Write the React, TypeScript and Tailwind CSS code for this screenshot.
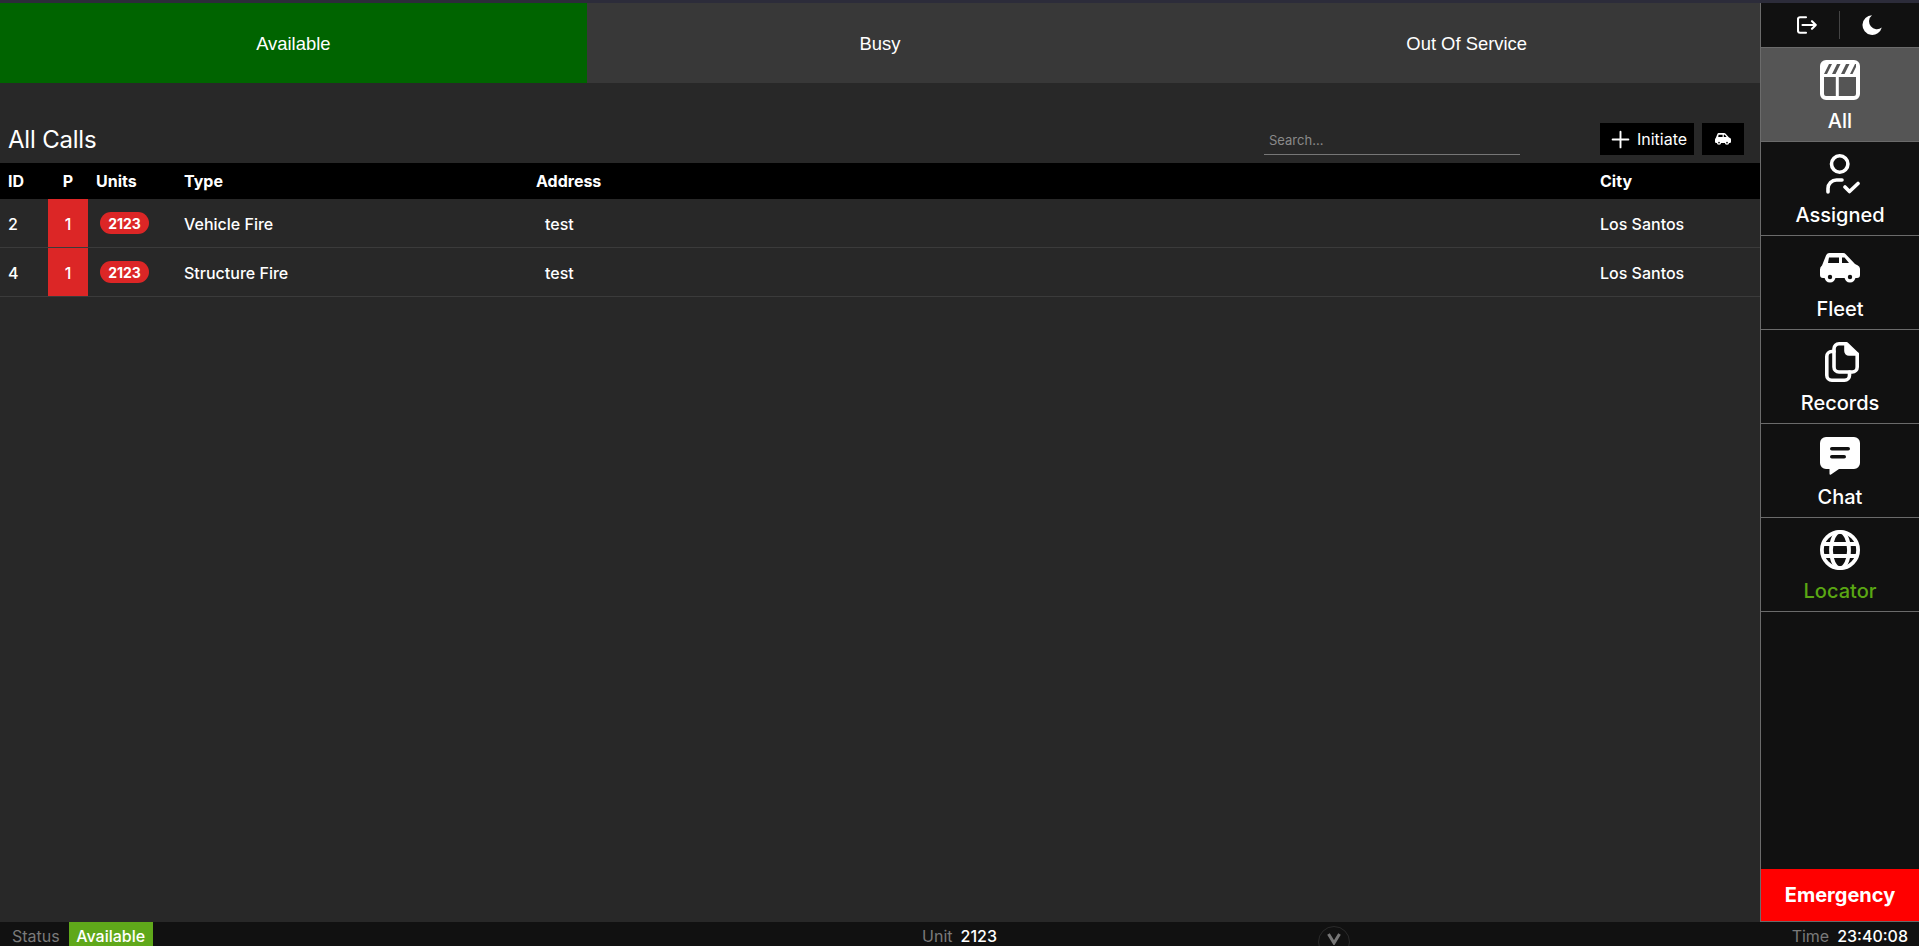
import React from "react";
import { Plus } from "lucide-react";

const Clap = () => (
  <svg width="40" height="40" viewBox="0 0 40 40" fill="none">
    <rect x="2" y="2" width="36" height="36" rx="4" stroke="#fff" strokeWidth="4" />
    <path d="M2 17h36V5a3 3 0 0 0-3-3H5a3 3 0 0 0-3 3z" fill="#fff" />
    <path d="M4 14l5-10h3l-5 10zM12 14l5-10h3.500l-5 10zM21 14l5-10h3.500l-5 10zM30 14l5-10h1v3l-3.500 7z" fill="#555" />
    <path d="M17.300 16v22" stroke="#fff" strokeWidth="3" />
  </svg>
);
const UserCheck = () => (
  <svg width="40" height="40" viewBox="0 0 40 40" fill="none" stroke="#fff" strokeWidth="3.600" strokeLinecap="round" strokeLinejoin="round">
    <circle cx="19.7" cy="10" r="8.200" />
    <path d="M8 38v-3.500a8.500 8.500 0 0 1 8.500-8.500H22" />
    <path d="M25 33l4.500 4.500 8.500-8" />
  </svg>
);
const Car = ({ w = 40, h = 30 }: { w?: number; h?: number }) => (
  <svg width={w} height={h} viewBox="0 0 40 30">
    <path fillRule="evenodd" fill="#fff" d="M9 0h14a4 4 0 0 1 3 1.400L35 11l2.500 1.200A4 4 0 0 1 40 16v6a3 3 0 0 1-3 3H3a3 3 0 0 1-3-3v-5.500a5 5 0 0 1 2-4L6 2.500A4 4 0 0 1 9 0zM9 4.500L8 10h11V4.500zM22 4.500V10h7l-4.500-5.500z" />
    <circle cx="10" cy="24" r="5.500" fill="#fff" />
    <circle cx="30" cy="24" r="5.500" fill="#fff" />
    <circle cx="10" cy="24" r="2.200" fill="#111" />
    <circle cx="30" cy="24" r="2.200" fill="#111" />
  </svg>
);
const Docs = () => (
  <svg className="ml-[3px]" width="34" height="40" viewBox="0 0 34 40" fill="none" stroke="#fff" strokeWidth="3.600" strokeLinecap="round" strokeLinejoin="round">
    <path d="M14 1.800h7.500L32.200 12v13a5 5 0 0 1-5 5H14a5 5 0 0 1-5-5V6.800a5 5 0 0 1 5-5z" />
    <path d="M21 2v7a3 3 0 0 0 3 3h8" fill="#fff" />
    <path d="M9 9.500H6.800a5 5 0 0 0-5 5V33.200a5 5 0 0 0 5 5H19.500a5 5 0 0 0 5-5V30" />
  </svg>
);
const Chat = () => (
  <svg width="40" height="38" viewBox="0 0 40 38">
    <path fill="#fff" d="M6 0h28a6 6 0 0 1 6 6v20a6 6 0 0 1-6 6H19l-8 5.500a1 1 0 0 1-1.500-.8V32H6a6 6 0 0 1-6-6V6a6 6 0 0 1 6-6z" />
    <rect x="10" y="10" width="20" height="3.600" rx="1.800" fill="#111" />
    <rect x="10" y="18" width="16" height="3.600" rx="1.800" fill="#111" />
  </svg>
);
const Globe = () => (
  <svg width="40" height="40" viewBox="0 0 40 40" fill="none" stroke="#fff" strokeWidth="3.800">
    <circle cx="20" cy="20" r="18.100" />
    <ellipse cx="20" cy="20" rx="9" ry="18.100" />
    <path d="M3 14h34M3 26h34" />
  </svg>
);
const Exit = () => (
  <svg width="20" height="18" viewBox="0 0 20 18" fill="none" stroke="#fff" strokeWidth="2.100" strokeLinecap="round" strokeLinejoin="round">
    <path d="M9 1.200H3a2 2 0 0 0-2 2v11.600a2 2 0 0 0 2 2h6" />
    <path d="M5.500 9H18.800M15 5.200L18.800 9 15 12.800" />
  </svg>
);
const Moon = () => (
  <svg width="20" height="20" viewBox="0 0 20 20">
    <path fill="#fff" d="M10 0.300A9.800 9.800 0 1 0 19.800 12.500 7 7 0 0 1 10 .300z" />
  </svg>
);

const Nav = ({ icon, label, active, green }: { icon: React.ReactNode; label: string; active?: boolean; green?: boolean }) => (
  <div className={`h-[94px] flex flex-col items-center border-t border-[#6b6b6b] ${active ? "bg-[#555555]" : ""}`}>
    <div className="h-[50px] mt-[7px] flex items-center justify-center">{icon}</div>
    <span className={`text-[20px] leading-[24px] mt-[4px] font-medium ${green ? "text-[#5aa713]" : "text-white"}`}>{label}</span>
  </div>
);

const cols = "grid grid-cols-[48px_40px_96px_352px_1064px_160px] items-center";

const Row = ({ id, type }: { id: string; type: string }) => (
  <div className={`${cols} h-[49px] border-b border-[#3b3b3b] text-[16px] font-medium text-white`}>
    <div className="pl-[8px] pt-[1px]">{id}</div>
    <div className="h-full bg-[#dc2626] flex items-center justify-center pt-[1px]">1</div>
    <div className="pl-[12px] flex">
      <span className="inline-flex w-[49px] h-[22px] rounded-full bg-[#dc2626] items-center justify-center text-[14px] font-bold">2123</span>
    </div>
    <div className="pt-[1px]">{type}</div>
    <div className="pl-[9px] pt-[1px]">test</div>
    <div className="pt-[1px]">Los Santos</div>
  </div>
);

export default function App() {
  return (
    <div className="h-[946px] w-[1919px] flex flex-col overflow-hidden bg-[#282828] text-white font-['Inter',sans-serif]">
      <div className="h-[3px] bg-[#2c2c3a]" />
      <div className="flex flex-1 min-h-0">
        <main className="w-[1760px] flex flex-col">
          <div className="grid grid-cols-3 h-[80px] text-[18.4px] font-['Liberation_Sans',sans-serif]">
            <div className="bg-[#006400] flex items-center justify-center pt-[2px]">Available</div>
            <div className="bg-[#383838] flex items-center justify-center pt-[2px]">Busy</div>
            <div className="bg-[#383838] flex items-center justify-center pt-[2px]">Out Of Service</div>
          </div>
          <div className="h-[80px] flex items-end pb-[8px]">
            <h1 className="ml-[8px] text-[24px] leading-[30px] tracking-[-0.2px]">All Calls</h1>
            <div className="ml-auto w-[256px] h-[32px] border-b border-[#777] flex items-center pl-[5px] pt-[4px] text-[13px] text-[#8a8a8a]">Search...</div>
            <div className="ml-[80px] w-[94px] h-[32px] bg-black flex items-center justify-center gap-[3px] text-[16px]">
              <Plus size={27} strokeWidth={1.7} />
              <span>Initiate</span>
            </div>
            <div className="ml-[8px] mr-[16px] w-[42px] h-[32px] bg-black flex items-center justify-center">
              <Car w={16} h={12} />
            </div>
          </div>
          <div className={`${cols} h-[36px] bg-black text-[16px] font-bold`}>
            <div className="pl-[8px]">ID</div>
            <div className="text-center">P</div>
            <div className="pl-[8px]">Units</div>
            <div>Type</div>
            <div>Address</div>
            <div>City</div>
          </div>
          <Row id="2" type="Vehicle Fire" />
          <Row id="4" type="Structure Fire" />
        </main>
        <aside className="w-[159px] bg-[#111111] border-l border-[#6b6b6b] border-b flex flex-col">
          <div className="h-[44px] flex items-center justify-center gap-[22px] pr-[1px]">
            <Exit />
            <div className="w-px h-[28px] bg-[#444]" />
            <Moon />
          </div>
          <Nav icon={<Clap />} label="All" active />
          <Nav icon={<UserCheck />} label="Assigned" />
          <Nav icon={<Car />} label="Fleet" />
          <Nav icon={<Docs />} label="Records" />
          <Nav icon={<Chat />} label="Chat" />
          <Nav icon={<Globe />} label="Locator" green />
          <div className="flex-1 border-t border-[#6b6b6b]" />
          <div className="h-[52px] bg-[#ff0000] flex items-center justify-center text-[20px] font-bold">Emergency</div>
        </aside>
      </div>
      <footer className="h-[24px] bg-[#111111] relative grid grid-cols-[1fr_auto_1fr] text-[16px] leading-[28px]">
        <div className="flex">
          <span className="ml-[12px] text-[#7a7a7a]">Status</span>
          <span className="ml-[9px] w-[84px] bg-[#5fa81a] text-center font-medium">Available</span>
        </div>
        <div className="flex gap-[8px]">
          <span className="text-[#7a7a7a]">Unit</span>
          <span className="font-medium">2123</span>
        </div>
        <div className="flex justify-end pr-[11px] gap-[8px]">
          <span className="text-[#7a7a7a]">Time</span>
          <span className="font-medium">23:40:08</span>
        </div>
        <div className="absolute left-[1318px] top-[4px] w-[32px] h-[32px] rounded-full border border-[#2a2a2a] flex justify-center pt-[6px]">
          <svg width="14" height="12" viewBox="0 0 14 12" fill="none" stroke="#777" strokeWidth="3"><path d="M1.500 1l5.500 9 5.500-9" /></svg>
        </div>
      </footer>
    </div>
  );
}
